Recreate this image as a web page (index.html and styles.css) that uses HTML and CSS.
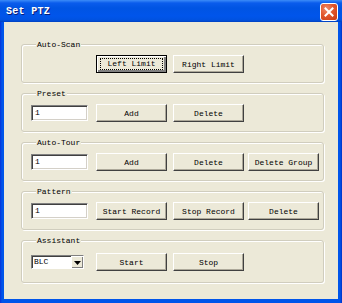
FILE: index.html
```html
<!DOCTYPE html>
<html>
<head>
<meta charset="utf-8">
<link rel="stylesheet" href="styles.css">
</head>
<body>
<div class="window">
  <div class="titlebar">
    <span class="title">Set PTZ</span>
    <span class="close"><svg width="10" height="10" viewBox="0 0 10 10"><path d="M1.5 1.5 L8.5 8.5 M8.5 1.5 L1.5 8.5" stroke="#fff" stroke-width="2" stroke-linecap="square"/></svg></span>
  </div>
  <div class="client">
    <div class="group">
      <div class="legend">Auto-Scan</div>
      <div class="row offset">
        <button class="btn default"><span class="focus">Left Limit</span></button>
        <button class="btn">Right Limit</button>
      </div>
    </div>
    <div class="group">
      <div class="legend">Preset</div>
      <div class="row">
        <div class="edit">1</div>
        <button class="btn">Add</button>
        <button class="btn">Delete</button>
      </div>
    </div>
    <div class="group">
      <div class="legend">Auto-Tour</div>
      <div class="row">
        <div class="edit">1</div>
        <button class="btn">Add</button>
        <button class="btn">Delete</button>
        <button class="btn last">Delete Group</button>
      </div>
    </div>
    <div class="group">
      <div class="legend">Pattern</div>
      <div class="row">
        <div class="edit">1</div>
        <button class="btn">Start Record</button>
        <button class="btn">Stop Record</button>
        <button class="btn last">Delete</button>
      </div>
    </div>
    <div class="group tall">
      <div class="legend">Assistant</div>
      <div class="row">
        <div class="combo"><span class="val">BLC</span><span class="arrow"><svg width="7" height="4" viewBox="0 0 7 4"><path d="M0 0 H7 L3.5 4 Z" fill="#000"/></svg></span></div>
        <button class="btn">Start</button>
        <button class="btn">Stop</button>
      </div>
    </div>
  </div>
</div>
</body>
</html>
```
FILE: styles.css
```css
html, body {
  margin: 0;
  padding: 0;
  background: #fff;
}
.window {
  width: 342px;
  height: 303px;
  box-sizing: border-box;
  background: linear-gradient(90deg, #0831D9 0px, #0055EA 2px, #0055EA 340px, #0031C5 342px);
  display: flex;
  flex-direction: column;
  font-family: "Liberation Mono", "DejaVu Sans Mono", monospace;
}
.titlebar {
  height: 22px;
  flex: none;
  display: flex;
  align-items: center;
  justify-content: space-between;
  padding: 0 4px 0 6px;
  background: linear-gradient(180deg, #3C8CF8 0px, #0A5CEC 3px, #0054E3 8px, #0055EB 16px, #0052E0 20px, #0040C0 22px);
}
.title {
  color: #fff;
  font-weight: bold;
  font-size: 10px;
  letter-spacing: 0.3px;
  text-shadow: 1px 1px 0 #0A1E78;
  padding-top: 1px;
}
.close {
  width: 16px;
  height: 16px;
  border: 1px solid #fff;
  border-radius: 3px;
  background: radial-gradient(circle at 35% 30%, #F08A6A 0%, #E2572D 45%, #C73A13 100%);
  display: flex;
  align-items: center;
  justify-content: center;
  margin-top: 1px;
}
.client {
  flex: 1;
  margin: 0 4px 4px 4px;
  background: #ECE9D8;
  padding: 22px 0 0 17px;
  box-sizing: border-box;
}
.group {
  width: 303px;
  box-sizing: border-box;
  border: 1px solid #D0CDBE;
  border-radius: 3px;
  box-shadow: inset 1px 1px 0 #fff, 1px 1px 0 #fff;
  padding: 0 0 9px 9px;
  margin-bottom: 10px;
}
.group.tall {
  padding-bottom: 11px;
}
.legend {
  margin: -5px 0 0 5px;
  width: fit-content;
  background: #ECE9D8;
  padding: 0 1px;
  height: 9px;
  line-height: 9px;
  font-size: 8px;
  color: #000;
}
.row {
  display: flex;
  align-items: center;
  margin-top: 6px;
  height: 18px;
  gap: 6px;
}
.group.tall .row {
  margin-top: 8px;
}
.row.offset {
  padding-left: 65px;
}
.edit {
  width: 57px;
  height: 16px;
  box-sizing: border-box;
  background: #fff;
  border-top: 1px solid #808080;
  border-left: 1px solid #808080;
  border-right: 1px solid #fff;
  border-bottom: 1px solid #fff;
  box-shadow: inset 1px 1px 0 #404040, inset -1px -1px 0 #D4D0C8;
  font-size: 8px;
  line-height: 14px;
  padding-left: 3px;
  margin-right: 2px;
  color: #000;
}
.combo {
  width: 53px;
  height: 14px;
  box-sizing: border-box;
  background: #fff;
  border-top: 1px solid #808080;
  border-left: 1px solid #808080;
  border-right: 1px solid #fff;
  border-bottom: 1px solid #fff;
  box-shadow: inset 1px 1px 0 #404040;
  display: flex;
  font-size: 8px;
  line-height: 12px;
  margin-right: 6px;
}
.combo .val {
  flex: 1;
  padding-left: 2px;
  color: #000;
}
.combo .arrow {
  width: 12px;
  background: #ECE9D8;
  border-left: 1px solid #fff;
  border-top: 1px solid #fff;
  box-shadow: inset -1px -1px 0 #808080;
  display: flex;
  align-items: center;
  justify-content: center;
  box-sizing: border-box;
}
.btn {
  width: 71px;
  height: 18px;
  box-sizing: border-box;
  padding: 0;
  margin: 0;
  background: #ECE9D8;
  font-family: "Liberation Mono", "DejaVu Sans Mono", monospace;
  font-size: 8px;
  color: #000;
  border-top: 1px solid #fff;
  border-left: 1px solid #fff;
  border-right: 1px solid #404040;
  border-bottom: 1px solid #404040;
  box-shadow: inset -1px -1px 0 #ACA899;
  display: flex;
  align-items: center;
  justify-content: center;
}
.btn.last {
  margin-left: -2px;
}
.btn.default {
  border: 1px solid #000;
  box-shadow: inset 1px 1px 0 #fff, inset -2px -2px 0 #808080;
  padding: 2px 3px;
}
.btn .focus {
  flex: 1;
  align-self: stretch;
  display: flex;
  align-items: center;
  justify-content: center;
  border: 1px dotted #000;
  line-height: 10px;
}
```
